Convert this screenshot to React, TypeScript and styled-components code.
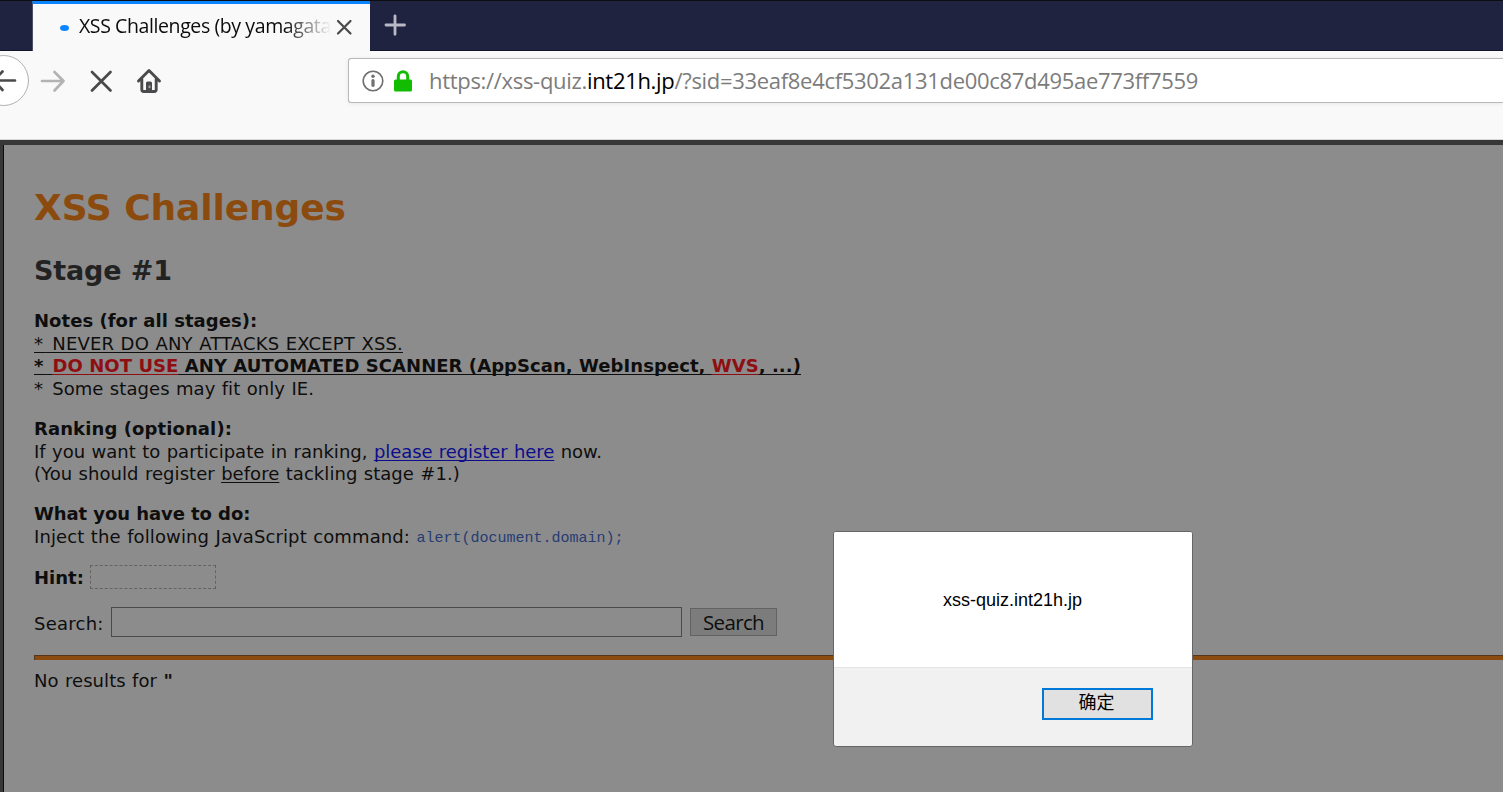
import React from "react";
import styled, { createGlobalStyle, css } from "styled-components";

const GlobalStyle = createGlobalStyle`
  * { box-sizing: border-box; }
  body { margin: 0; overflow: hidden; background: #f9f9fa; }
`;

const underline = css`
  text-decoration: underline;
  text-underline-offset: 2px;
  text-decoration-thickness: 1px;
  text-decoration-skip-ink: none;
`;

const Browser = styled.div`
  display: flex;
  flex-direction: column;
  width: 1503px;
  height: 792px;
  overflow: hidden;
  position: relative;
`;

const TabBar = styled.div`
  display: flex;
  height: 51px;
  padding-left: 32px;
  background: #202340;
  border-top: 1px solid #0c0c13;
  box-shadow: inset 0 -1px 0 #11132e;
`;

const Tab = styled.div`
  display: flex;
  align-items: center;
  width: 338px;
  background: #f9f9fa;
  border-top: 3px solid #0a84ff;
  border-left: 1px solid #4d4f66;
  padding-left: 27px;
`;

const Loading = styled.span`
  width: 9px;
  height: 6px;
  border-radius: 50%;
  background: #0a84ff;
  margin-right: 10px;
`;

const TabTitle = styled.span`
  width: 251px;
  white-space: nowrap;
  font: 19.5px/30px "Open Sans", "Noto Sans", sans-serif;
  letter-spacing: -0.4px;
  color: #0c0c0d;
  margin-top: -4px;
  mask-image: linear-gradient(to right, #000 205px, transparent 252px);
`;

const TabClose = styled.svg`
  margin: -2px 0 0 4px;
`;

const NewTab = styled.svg`
  margin: 13px 0 0 14px;
`;

const Toolbar = styled.div`
  display: flex;
  height: 89px;
  background: #f9f9fa;
  border-bottom: 1px solid #d5d8d7;
`;

const NavButtons = styled.svg`
  flex: none;
`;

const UrlBar = styled.div`
  display: flex;
  align-items: center;
  flex: 1;
  height: 45px;
  margin-top: 7px;
  margin-left: 168px;
  padding-left: 13px;
  background: #fff;
  border: 1px solid #b9b9ba;
  border-right: 0;
  border-radius: 3px 0 0 3px;
  box-shadow: 0 1px 5px rgba(0, 0, 0, 0.07);
`;

const Url = styled.span`
  margin: -2px 0 0 15px;
  white-space: nowrap;
  font: 22px/30px "Open Sans", "Noto Sans", sans-serif;
  letter-spacing: -0.31px;
  color: #7c7c7c;
`;

const Domain = styled.span`
  color: #000;
`;

const Page = styled.main`
  flex: 1;
  background: #8c8c8c;
  border-top: 5px solid #373737;
  border-left: 3px solid #373737;
  box-shadow: inset 1px 0 0 #0c0c0c;
  padding: 37px 0 0 31px;
  font: 18px/22px Verdana, "DejaVu Sans", sans-serif;
  color: #0e0e0e;
`;

const Title = styled.h1`
  margin: 0;
  font-size: 36px;
  line-height: 52px;
  color: #8c4b0e;
  letter-spacing: -0.1px;
`;

const Stage = styled.h2`
  margin: 20px 0 0;
  font-size: 27px;
  line-height: 34px;
  color: #222;
  letter-spacing: -0.15px;
`;

const Block = styled.section<{ $top: number }>`
  margin-top: ${(p) => p.$top}px;
`;

const Line = styled.div<{ $h?: number; $bold?: boolean; $track?: number }>`
  height: ${(p) => p.$h ?? 22}px;
  white-space: nowrap;
  font-weight: ${(p) => (p.$bold ? 700 : 400)};
  letter-spacing: ${(p) => p.$track ?? 0}px;
  word-spacing: ${(p) => (p.$bold ? 0 : 0.6)}px;
`;

const Under = styled.span`
  ${underline}
`;

const Star = styled.span`
  letter-spacing: 2.8px;
`;

const Red = styled.span`
  color: #8f0e12;
  ${underline}
`;

const Link = styled.a`
  color: #0d0d8c;
  letter-spacing: -0.06px;
  ${underline}
`;

const Code = styled.code`
  position: relative;
  top: -1px;
  font: 15px/20px "Liberation Mono", monospace;
  letter-spacing: 0;
  color: #263c73;
`;

const Row = styled.div<{ $top: number; $h: number }>`
  display: flex;
  align-items: center;
  height: ${(p) => p.$h}px;
  margin-top: ${(p) => p.$top}px;
`;

const Label = styled.span<{ $w: number; $drop: number; $bold?: boolean; $track?: number }>`
  width: ${(p) => p.$w}px;
  white-space: nowrap;
  font-weight: ${(p) => (p.$bold ? 700 : 400)};
  letter-spacing: ${(p) => p.$track ?? 0}px;
  padding-top: ${(p) => p.$drop}px;
`;

const HintBox = styled.span`
  width: 126px;
  height: 24px;
  border: 1px dashed #636363;
`;

const SearchInput = styled.input`
  width: 571px;
  height: 30px;
  padding: 0 6px;
  background: #8c8c8c;
  border: 1px solid #4a4a4a;
`;

const SearchButton = styled.button`
  width: 87px;
  height: 28px;
  margin-left: 8px;
  padding: 0 0 1px;
  background: #7c7c7c;
  border: 1px solid #626262;
  font: 20.5px/24px "Open Sans", "Noto Sans", sans-serif;
  letter-spacing: -0.65px;
  color: #0e0e0e;
`;

const Rule = styled.div`
  height: 5px;
  margin: 18px 0 10px;
  background: #8c4b0e;
  border-top: 1px solid #56351a;
  border-left: 1px solid #56351a;
`;

const Dialog = styled.div`
  position: absolute;
  left: 833px;
  top: 531px;
  width: 360px;
  height: 216px;
  display: flex;
  flex-direction: column;
  border: 1px solid #666;
  border-radius: 3px;
  background: #f1f1f1;
  overflow: hidden;
`;

const Message = styled.div`
  height: 136px;
  padding: 58px 1px 0 0;
  background: #fff;
  border-bottom: 1px solid #e4e4e4;
  text-align: center;
  font: 18px/20px "Liberation Sans", Arial, sans-serif;
  color: #000;
`;

const Actions = styled.div`
  display: flex;
  justify-content: flex-end;
  padding: 20px 39px 0 0;
`;

const OkButton = styled.button`
  width: 111px;
  height: 32px;
  padding: 0 2px 6px 0;
  background: #e1e1e1;
  border: 2px solid #0078d7;
  font: 18px/22px "Noto Sans CJK SC", sans-serif;
  color: #000;
`;

export default function App() {
  return (
    <Browser>
      <GlobalStyle />
      <TabBar>
        <Tab>
          <Loading />
          <TabTitle>XSS Challenges (by yamagata</TabTitle>
          <TabClose width="20" height="20" viewBox="0 0 20 20" fill="none" stroke="#4a4a4c" strokeWidth="2.2" strokeLinecap="round">
            <path d="M4 4l12.5 12.5M16.5 4L4 16.5" />
          </TabClose>
        </Tab>
        <NewTab width="22" height="22" viewBox="0 0 22 22" fill="none" stroke="#b9b9c6" strokeWidth="2.8" strokeLinecap="round">
          <path d="M11 1.800v18.500M2 11h18.500" />
        </NewTab>
      </TabBar>
      <Toolbar>
        <NavButtons width="180" height="60" viewBox="0 0 180 60" fill="none" strokeLinecap="round" strokeLinejoin="round">
          <circle cx="3.5" cy="29.5" r="25" fill="#fff" stroke="#b1b1b1" />
          <path d="M15 29.5H-5M2.500 20.500L-6 29.500L2.500 39" stroke="#4a4a4c" strokeWidth="2.7" />
          <path d="M42 30H63.500M54.500 21L63.500 30L54.500 39.500" stroke="#b3b3b4" strokeWidth="2.700" />
          <path d="M92 21L110.500 39.500M110.500 21L92 39.500" stroke="#4a4a4c" strokeWidth="2.700" />
          <path d="M138.500 30L149 19.500L159.500 30M141.800 28V38.500Q141.800 40.500 143.800 40.500H154.200Q156.200 40.500 156.200 38.500V28" stroke="#4a4a4c" strokeWidth="2.900" />
          <path d="M146 40V32Q146 30.500 147.500 30.500H150.500Q152 30.500 152 32V40Z" fill="#4a4a4c" />
          <rect x="148.600" y="34.500" width="1.800" height="2.600" fill="#aaa" />
        </NavButtons>
        <UrlBar>
          <svg width="52" height="24" viewBox="0 0 52 24" fill="none">
            <circle cx="11" cy="12" r="9.800" stroke="#707071" strokeWidth="1.600" />
            <circle cx="11" cy="7.300" r="1.700" fill="#707071" />
            <path d="M11 11.500V16.300" stroke="#707071" strokeWidth="3.200" strokeLinecap="round" />
            <rect x="32" y="10.500" width="18" height="12" rx="1.500" fill="#12bc00" />
            <path d="M36.300 12V7.500a4.700 4.700 0 0 1 9.400 0V12" stroke="#12bc00" strokeWidth="3" />
          </svg>
          <Url>
            https://xss-quiz.<Domain>int21h.jp</Domain>/?sid=33eaf8e4cf5302a131de00c87d495ae773ff7559
          </Url>
        </UrlBar>
      </Toolbar>
      <Page>
        <Title>XSS Challenges</Title>
        <Stage>Stage #1</Stage>
        <Block $top={22}>
          <Line $h={23} $bold $track={0.04}>Notes (for all stages):</Line>
          <Line $track={0.16}><Under><Star>*</Star> NEVER DO ANY ATTACKS EXCEPT XSS.</Under></Line>
          <Line $h={23} $bold $track={0.06}>
            <Under><Star>*</Star> <Red>DO NOT USE</Red> ANY AUTOMATED SCANNER (AppScan, WebInspect, <Red>WVS</Red>, ...)</Under>
          </Line>
          <Line $track={0.06}><Star>*</Star> Some stages may fit only IE.</Line>
        </Block>
        <Block $top={18}>
          <Line $h={23} $bold $track={0.1}>Ranking (optional):</Line>
          <Line $track={0.025}>If you want to participate in ranking, <Link>please register here</Link> now.</Line>
          <Line $track={0.05}>(You should register <Under>before</Under> tackling stage #1.)</Line>
        </Block>
        <Block $top={18}>
          <Line $h={23} $bold $track={-0.07}>What you have to do:</Line>
          <Line $track={0.11}>Inject the following JavaScript command: <Code>alert(document.domain);</Code></Line>
        </Block>
        <Row $top={17} $h={24}>
          <Label $w={56} $drop={2} $bold>Hint:</Label>
          <HintBox />
        </Row>
        <Row $top={18} $h={30}>
          <Label $w={77} $drop={4} $track={0.25}>Search:</Label>
          <SearchInput />
          <SearchButton>Search</SearchButton>
        </Row>
        <Rule />
        <Line $track={0.06}>No results for <b>"</b></Line>
      </Page>
      <Dialog>
        <Message>xss-quiz.int21h.jp</Message>
        <Actions>
          <OkButton>确定</OkButton>
        </Actions>
      </Dialog>
    </Browser>
  );
}
